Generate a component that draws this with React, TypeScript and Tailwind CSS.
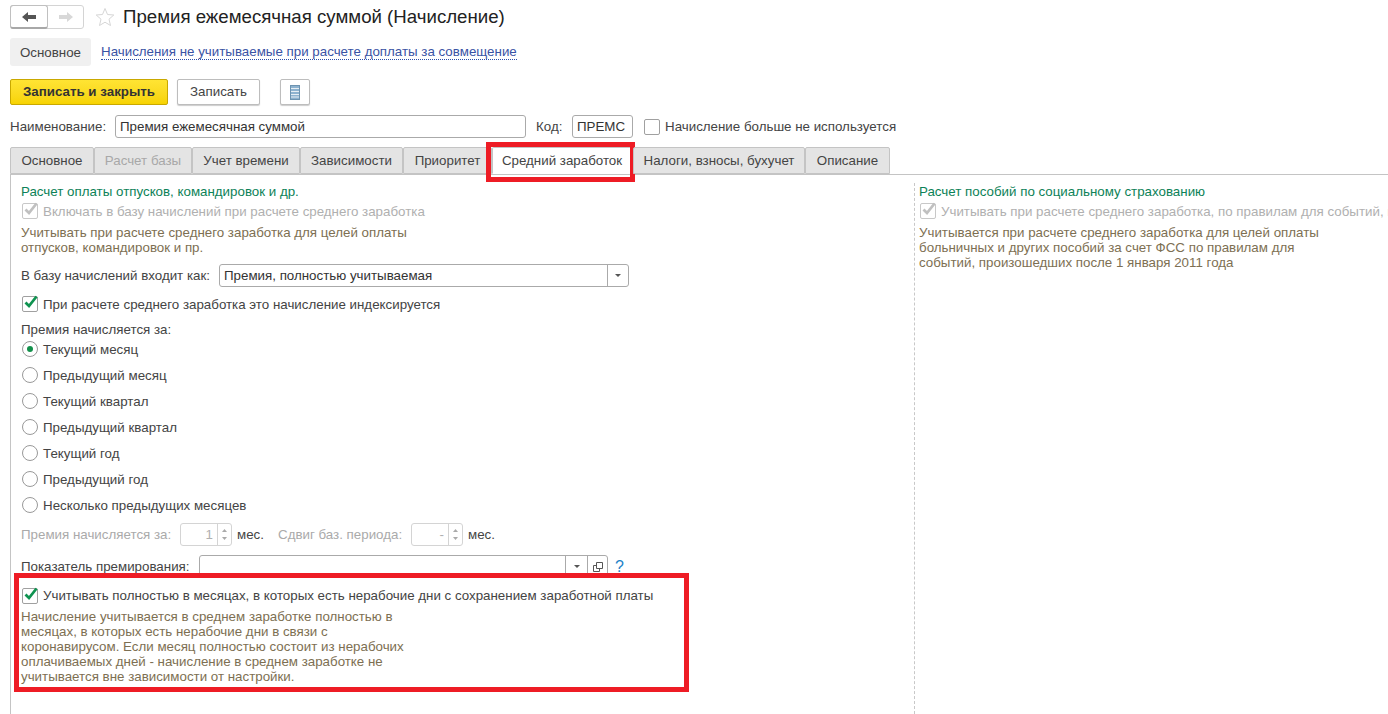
import React from "react";

function Check({ disabled, on = true }: { disabled?: boolean; on?: boolean }) {
  return (
    <span className={`relative block h-[16px] w-[16px] shrink-0 rounded-[2px] border bg-white ${disabled ? "border-[#c8c8c8]" : "border-[#a0a0a0]"}`}>
      {on && (
        <svg width="16" height="16" viewBox="0 0 16 16" className="absolute left-[-1px] top-[-1px] overflow-visible">
          <path d="M3.5 6.5 L7 10 L14.5 0.5" fill="none" stroke={disabled ? "#c0c0c0" : "#0f9350"} strokeWidth="2.8" />
        </svg>
      )}
    </span>
  );
}

function Radio({ label, on }: { label: string; on?: boolean }) {
  return (
    <div className="flex h-[26px] items-center gap-[5px] pl-[11px]">
      <span className="flex h-[16px] w-[16px] items-center justify-center rounded-full border border-[#999] bg-white">
        {on && <span className="h-[6px] w-[6px] rounded-full bg-[#12904a]" />}
      </span>
      <span>{label}</span>
    </div>
  );
}

function Caret({ color = "#555" }: { color?: string }) {
  return (
    <svg width="6" height="3" viewBox="0 0 6 3">
      <path d="M0 0H6L3 3Z" fill={color} />
    </svg>
  );
}

function Spinner({ value }: { value: string }) {
  return (
    <span className="flex h-[23px] w-[52px] rounded-[3px] border border-[#d4d4d4] bg-white">
      <span className="flex flex-1 items-center justify-end pr-[4px] text-[#b0b0b0]">{value}</span>
      <span className="flex w-[14px] flex-col items-center justify-center gap-[5px] border-l border-[#d4d4d4]">
        <svg width="5" height="3" viewBox="0 0 5 3"><path d="M0 3H5L2.5 0Z" fill="#aaa" /></svg>
        <svg width="5" height="3" viewBox="0 0 5 3"><path d="M0 0H5L2.5 3Z" fill="#aaa" /></svg>
      </span>
    </span>
  );
}

const tabs: [string, number, boolean?, boolean?][] = [
  ["Основное", 84],
  ["Расчет базы", 98, true],
  ["Учет времени", 108],
  ["Зависимости", 103],
  ["Приоритет", 89],
  ["Средний заработок", 141, false, true],
  ["Налоги, взносы, бухучет", 172],
  ["Описание", 85],
];

export default function App() {
  return (
    <div className="h-[714px] w-[1388px] overflow-hidden bg-white font-['Liberation_Sans',Arial,sans-serif] text-[13.33px] leading-[15px] text-[#444]">
      {/* header */}
      <div className="flex h-[38px] items-start pl-[10px] pt-[5px]">
        <div className="flex h-[24px] w-[74px] rounded-[3px] border border-[#d4d4d4]">
          <span className="mb-[-1px] ml-[-1px] mt-[-1px] flex w-[38px] items-center justify-center rounded-[3px] border border-b-2 border-[#c0c0c0] border-b-[#a8a8a8]">
            <svg width="14" height="10" viewBox="0 0 14 10"><path d="M0 5L6 0V3H14V7H6V10Z" fill="#555" /></svg>
          </span>
          <span className="flex flex-1 items-center justify-center">
            <svg width="14" height="10" viewBox="0 0 14 10"><path d="M14 5L8 0V3H0V7H8V10Z" fill="#d8d8d8" /></svg>
          </span>
        </div>
        <svg width="20" height="20" viewBox="0 0 20 20" className="ml-[11px] mt-[2px]">
          <path d="M10 1.5L12.5 7.5L18.8 8L14 12.2L15.5 18.5L10 15.2L4.5 18.5L6 12.2L1.2 8L7.5 7.5Z" fill="none" stroke="#d6d6d6" strokeWidth="1" />
        </svg>
        <h1 className="ml-[8px] mt-[1px] text-[18.67px] leading-[22px] text-[#222]">Премия ежемесячная суммой (Начисление)</h1>
      </div>

      {/* form sections */}
      <div className="flex h-[28px] items-center pl-[10px]">
        <span className="flex h-[28px] w-[81px] items-center justify-center rounded-[3px] bg-[#f0f0f0]">Основное</span>
        <span className="ml-[10px] border-b border-dotted border-[#2c4fa8] leading-[15px] text-[#3a53a4]">Начисления не учитываемые при расчете доплаты за совмещение</span>
      </div>

      {/* command bar */}
      <div className="mt-[13px] flex h-[26px] pl-[10px]">
        <button className="h-[26px] w-[158px] rounded-[2px] border border-[#c9a800] bg-gradient-to-b from-[#ffe433] to-[#f7d300] pb-[2px] font-bold text-[#333]">Записать и закрыть</button>
        <button className="ml-[9px] h-[26px] w-[83px] rounded-[2px] border border-[#bdbdbd] bg-white pb-[2px] shadow-[0_1px_1px_#ccc]">Записать</button>
        <button className="ml-[20px] flex h-[26px] w-[30px] items-center justify-center rounded-[2px] border border-[#bdbdbd] bg-white shadow-[0_1px_1px_#ccc]">
          <svg width="10" height="15" viewBox="0 0 10 15">
            <rect x="0.5" y="0.5" width="9" height="14" fill="#8db2cf" stroke="#6d93b0" />
            <path d="M1 3.5H9M1 6.5H9M1 9.5H9M1 12H9" stroke="#e6eef4" strokeWidth="1" />
          </svg>
        </button>
      </div>

      {/* name row */}
      <div className="mt-[10px] flex h-[23px] items-center pl-[10px]">
        <span className="w-[105px]">Наименование:</span>
        <span className="flex h-[23px] w-[411px] items-center rounded-[3px] border border-[#aaa] pl-[4px] text-[#333]">Премия ежемесячная суммой</span>
        <span className="ml-[10px] w-[36px]">Код:</span>
        <span className="flex h-[23px] w-[61px] items-center rounded-[3px] border border-[#aaa] pl-[4px] text-[#333]">ПРЕМС</span>
        <span className="ml-[11px]"><Check on={false} /></span>
        <span className="ml-[5px]">Начисление больше не используется</span>
      </div>

      {/* tabs */}
      <div className="ml-[10px] mt-[9px] flex h-[27px] items-stretch">
        {tabs.map(([t, w, dis, active]) => (
          <div key={t} style={{ width: w }} className={`relative flex items-center justify-center rounded-t-[2px] border border-[#c4c4c4] ${active ? "border-b-white bg-white pr-[1px]" : "bg-[#e4e4e4]"} ${dis ? "text-[#a8a8a8]" : "text-[#444]"}`}>
            {t}
            {active && <span className="absolute bottom-[-9px] left-[-7px] right-[-3px] top-[-6px] border-[5px] border-[#ee1c25]" />}
          </div>
        ))}
      </div>

      {/* panel */}
      <div className="ml-[10px] flex h-[540px] border-l border-t border-[#c4c4c4]">
        <div className="w-[903px] shrink-0">
          <div className="flex h-[24px] items-end pl-[10px] text-[#0d8258]">Расчет оплаты отпусков, командировок и др.</div>
          <div className="flex h-[24px] items-center gap-[5px] pl-[11px] text-[#b0b0b0]"><Check disabled />Включать в базу начислений при расчете среднего заработка</div>
          <div className="mt-[2px] pl-[10px] text-[#7d6f52]">Учитывать при расчете среднего заработка для целей оплаты<br />отпусков, командировок и пр.</div>
          <div className="mt-[9px] flex h-[23px] items-center pl-[10px]">
            <span className="w-[198px]">В базу начислений входит как:</span>
            <span className="flex h-[23px] w-[410px] rounded-[3px] border border-[#aaa] text-[#333]">
              <span className="flex flex-1 items-center pl-[4px]">Премия, полностью учитываемая</span>
              <span className="flex w-[21px] items-center justify-center border-l border-[#aaa]"><Caret /></span>
            </span>
          </div>
          <div className="mt-[6px] flex h-[22px] items-center gap-[5px] pl-[11px]"><Check />При расчете среднего заработка это начисление индексируется</div>
          <div className="mt-[6px] flex h-[16px] items-center pl-[10px]">Премия начисляется за:</div>
          <div className="mt-[-1px]">
            <Radio label="Текущий месяц" on />
            <Radio label="Предыдущий месяц" />
            <Radio label="Текущий квартал" />
            <Radio label="Предыдущий квартал" />
            <Radio label="Текущий год" />
            <Radio label="Предыдущий год" />
            <Radio label="Несколько предыдущих месяцев" />
          </div>
          <div className="mt-[5px] flex h-[23px] items-center pl-[10px]">
            <span className="w-[159px] text-[#aaa]">Премия начисляется за:</span>
            <Spinner value="1" />
            <span className="ml-[5px] w-[41px]">мес.</span>
            <span className="w-[133px] text-[#aaa]">Сдвиг баз. периода:</span>
            <Spinner value="-" />
            <span className="ml-[5px]">мес.</span>
          </div>
          <div className="mt-[9px] flex h-[23px] items-center pl-[10px]">
            <span className="w-[178px]">Показатель премирования:</span>
            <span className="flex h-[23px] w-[409px] rounded-[3px] border border-[#aaa]">
              <span className="flex-1" />
              <span className="flex w-[22px] items-center justify-center border-l border-[#aaa]"><Caret /></span>
              <span className="flex w-[20px] items-center justify-center border-l border-[#aaa]">
                <svg width="10" height="10" viewBox="0 0 10 10"><path d="M3.5.5h6v6h-6zM.5 3.5h3M.5 3.5v6h6v-3" fill="none" stroke="#555" /></svg>
              </span>
            </span>
            <span className="ml-[7px] text-[16px] text-[#1c82c8]">?</span>
          </div>
          <div className="relative mt-[-5px]">
            <span className="absolute bottom-0 left-[3px] top-0 w-[675px] border-[5px] border-[#ee1c25]" />
            <div className="flex h-[31px] items-end gap-[5px] pl-[11px]"><Check /><span className="mb-[1px]">Учитывать полностью в месяцах, в которых есть нерабочие дни с сохранением заработной платы</span></div>
            <div className="mt-[5px] pb-[8px] pl-[10px] text-[#7d6f52]">
              Начисление учитывается в среднем заработке полностью в<br />
              месяцах, в которых есть нерабочие дни в связи с<br />
              коронавирусом. Если месяц полностью состоит из нерабочих<br />
              оплачиваемых дней - начисление в среднем заработке не<br />
              учитывается вне зависимости от настройки.
            </div>
          </div>
        </div>
        <div className="mt-[8px] flex-1 overflow-hidden border-l border-dashed border-[#c8c8c8] pl-[4px]">
          <div className="flex h-[16px] items-end text-[#0d8258]">Расчет пособий по социальному страхованию</div>
          <div className="flex h-[24px] items-center gap-[5px] whitespace-nowrap pl-[1px] text-[#b0b0b0]"><Check disabled />Учитывать при расчете среднего заработка, по правилам для событий, произошедших после</div>
          <div className="mt-[2px] text-[#7d6f52]">
            Учитывается при расчете среднего заработка для целей оплаты<br />
            больничных и других пособий за счет ФСС по правилам для<br />
            событий, произошедших после 1 января 2011 года
          </div>
        </div>
      </div>
    </div>
  );
}
